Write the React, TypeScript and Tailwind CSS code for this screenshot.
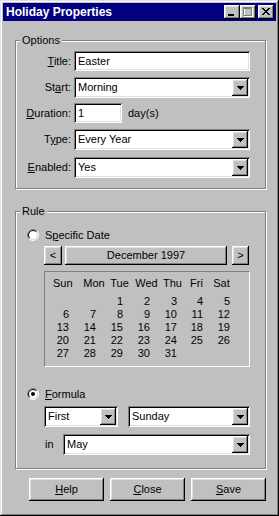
import React from "react";

const RAISED =
  "shadow-[inset_-1px_-1px_#000,inset_1px_1px_#fff,inset_-2px_-2px_#808080,inset_2px_2px_#dfdfdf]";
const SUNKEN =
  "shadow-[inset_1px_1px_#808080,inset_-1px_-1px_#fff,inset_2px_2px_#000,inset_-2px_-2px_#dfdfdf]";

function Arrow() {
  return (
    <svg width="7" height="4" viewBox="0 0 7 4" shapeRendering="crispEdges">
      <path d="M0 0h7v1H0z M1 1h5v1H1z M2 2h3v1H2z M3 3h1v1H3z" fill="#000" />
    </svg>
  );
}

function Edit({ value, className }: { value: string; className: string }) {
  return (
    <div className={`h-[20px] bg-white ${SUNKEN} pl-[4px] flex items-center ${className}`}>
      {value}
    </div>
  );
}

function Combo({ value, className }: { value: string; className: string }) {
  return (
    <div className={`h-[21px] bg-white ${SUNKEN} p-[2px] flex items-center ${className}`}>
      <span className="flex-1 pl-[2px] whitespace-nowrap">{value}</span>
      <div className={`w-[16px] h-[17px] bg-[#c0c0c0] ${RAISED} flex items-center justify-center`}>
        <Arrow />
      </div>
    </div>
  );
}

function Radio({ checked }: { checked?: boolean }) {
  // split along the diagonal: dark on top-left, light on bottom-right
  const arc = (r: number, top: boolean) => {
    const d = r * Math.SQRT1_2;
    const bl = `${6 - d} ${6 + d}`;
    const tr = `${6 + d} ${6 - d}`;
    return top ? `M${bl} A${r} ${r} 0 0 1 ${tr}` : `M${tr} A${r} ${r} 0 0 1 ${bl}`;
  };
  return (
    <svg width="12" height="12" viewBox="0 0 12 12" className="shrink-0">
      <circle cx="6" cy="6" r="4.5" fill="#fff" />
      <path d={arc(5.5, true)} stroke="#808080" fill="none" />
      <path d={arc(5.5, false)} stroke="#fff" fill="none" />
      <path d={arc(4.5, true)} stroke="#000" fill="none" />
      <path d={arc(4.5, false)} stroke="#dfdfdf" fill="none" />
      {checked && <circle cx="6" cy="6" r="2" fill="#000" />}
    </svg>
  );
}

function Group({ label, className, children }: { label: string; className: string; children: React.ReactNode }) {
  return (
    <div className={`relative border border-[#808080] shadow-[1px_1px_0_#fff,inset_1px_1px_0_#fff] ${className}`}>
      <span className="absolute left-[4px] top-[-7px] px-[2px] bg-[#c0c0c0] leading-[13px]">{label}</span>
      {children}
    </div>
  );
}

function Label({ pre, u, post }: { pre: string; u: string; post: string }) {
  return (
    <span className="w-[55px] text-right whitespace-nowrap">
      {pre}
      <span className="underline">{u}</span>
      {post}
    </span>
  );
}

const HEADS = [
  { d: "Sun", c: "ml-[8px] w-[19px]" },
  { d: "Mon", c: "ml-[9px] w-[26px]" },
  { d: "Tue", c: "ml-[0px] w-[25px]" },
  { d: "Wed", c: "ml-[1px] w-[27px]" },
  { d: "Thu", c: "ml-[3px] w-[19px]" },
  { d: "Fri", c: "ml-[8px] w-[12px]" },
  { d: "Sat", c: "ml-[11px] w-[17px]" },
];

const DAYS: (number | null)[] = [null, null, ...Array.from({ length: 31 }, (_, i) => i + 1), null, null];

function Calendar() {
  return (
    <div className="ml-[17px] mt-[6px] w-[206px] h-[96px] border border-t-[#808080] border-l-[#808080] border-b-white border-r-white pt-[5px]">
      <div className="flex leading-[13px]">
        {HEADS.map((h) => (
          <span key={h.d} className={`shrink-0 text-center whitespace-nowrap ${h.c}`}>
            {h.d}
          </span>
        ))}
      </div>
      <div className="mt-[5px] grid grid-cols-[24px_27px_27px_27px_27px_26px_27px] leading-[13px] text-right">
        {DAYS.map((d, i) => (
          <span key={i}>{d ?? ""}</span>
        ))}
      </div>
    </div>
  );
}

export default function App() {
  return (
    <div className="w-[279px] h-[516px] bg-[#c0c0c0] p-[3px] flex flex-col text-black text-[11px] [font-family:'Liberation_Sans',Arial,sans-serif] shadow-[inset_-1px_-1px_#000,inset_1px_1px_#dfdfdf,inset_-2px_-2px_#808080,inset_2px_2px_#fff]">
      {/* title bar */}
      <div className="h-[18px] bg-[#000080] flex items-center pl-[3px] pr-[2px]">
        <span className="flex-1 text-white font-bold text-[12px]">Holiday Properties</span>
        <div className={`w-[16px] h-[14px] bg-[#c0c0c0] ${RAISED}`}>
          <svg width="16" height="14" shapeRendering="crispEdges">
            <rect x="4" y="9" width="6" height="2" fill="#000" />
          </svg>
        </div>
        <div className={`w-[16px] h-[14px] bg-[#c0c0c0] ${RAISED}`}>
          <svg width="16" height="14" shapeRendering="crispEdges">
            <path d="M4 3h9v1H4z M4 3h1v9H4z M4 11h9v1H4z M12 3h1v9h-1z" fill="#fff" />
            <path d="M3 2h9v2H3z M3 2h1v9H3z M3 10h9v1H3z M11 2h1v9h-1z" fill="#808080" />
          </svg>
        </div>
        <div className={`ml-[2px] w-[16px] h-[14px] bg-[#c0c0c0] ${RAISED}`}>
          <svg width="16" height="14" shapeRendering="crispEdges">
            <path
              d="M4 3h2v1H4z M10 3h2v1h-2z M5 4h2v1H5z M9 4h2v1H9z M6 5h4v1H6z M7 6h2v1H7z M6 7h4v1H6z M5 8h2v1H5z M9 8h2v1H9z M4 9h2v1H4z M10 9h2v1h-2z"
              fill="#000"
            />
          </svg>
        </div>
      </div>

      <div className="pl-[12px] pr-[10px] pt-[19px] flex flex-col">
        {/* Options */}
        <Group label="Options" className="h-[149px] pt-[10px]">
          <div className="flex items-center h-[20px]">
            <Label pre="" u="T" post="itle:" />
            <Edit value="Easter" className="ml-[3px] w-[176px]" />
          </div>
          <div className="flex items-center h-[21px] mt-[6px]">
            <Label pre="St" u="a" post="rt:" />
            <Combo value="Morning" className="ml-[3px] w-[176px]" />
          </div>
          <div className="flex items-center h-[20px] mt-[5px]">
            <Label pre="" u="D" post="uration:" />
            <Edit value="1" className="ml-[3px] w-[48px]" />
            <span className="ml-[6px]">day(s)</span>
          </div>
          <div className="flex items-center h-[21px] mt-[6px]">
            <Label pre="T" u="y" post="pe:" />
            <Combo value="Every Year" className="ml-[3px] w-[176px]" />
          </div>
          <div className="flex items-center h-[21px] mt-[7px]">
            <Label pre="" u="E" post="nabled:" />
            <Combo value="Yes" className="ml-[3px] w-[176px]" />
          </div>
        </Group>

        {/* Rule */}
        <Group label="Rule" className="mt-[22px] h-[258px] pt-[17px] pl-[11px]">
          <div className="flex items-center h-[12px] gap-[6px]">
            <Radio />
            <span>
              S<span className="underline">p</span>ecific Date
            </span>
          </div>
          <div className="ml-[17px] mt-[5px] flex h-[19px]">
            <div className={`w-[18px] bg-[#c0c0c0] ${RAISED} flex items-center justify-center`}>&lt;</div>
            <div className={`ml-[3px] w-[162px] bg-[#c0c0c0] ${RAISED} flex items-center justify-center`}>
              December 1997
            </div>
            <div className={`ml-[5px] w-[17px] bg-[#c0c0c0] ${RAISED} flex items-center justify-center`}>&gt;</div>
          </div>
          <Calendar />
          <div className="flex items-center h-[12px] gap-[6px] mt-[21px]">
            <Radio checked />
            <span>
              <span className="underline">F</span>ormula
            </span>
          </div>
          <div className="ml-[17px] mt-[6px] flex">
            <Combo value="First" className="w-[74px]" />
            <Combo value="Sunday" className="ml-[10px] w-[122px]" />
          </div>
          <div className="ml-[17px] mt-[7px] flex items-center">
            <span className="w-[19px] pl-[1px]">in</span>
            <Combo value="May" className="w-[187px]" />
          </div>
        </Group>

        {/* buttons */}
        <div className="mt-[9px] ml-[14px] flex gap-[6px]">
          {[
            ["H", "elp"],
            ["C", "lose"],
            ["S", "ave"],
          ].map(([u, rest]) => (
            <div key={u} className={`w-[75px] h-[23px] bg-[#c0c0c0] ${RAISED} flex items-center justify-center`}>
              <span>
                <span className="underline">{u}</span>
                {rest}
              </span>
            </div>
          ))}
        </div>
      </div>
    </div>
  );
}
